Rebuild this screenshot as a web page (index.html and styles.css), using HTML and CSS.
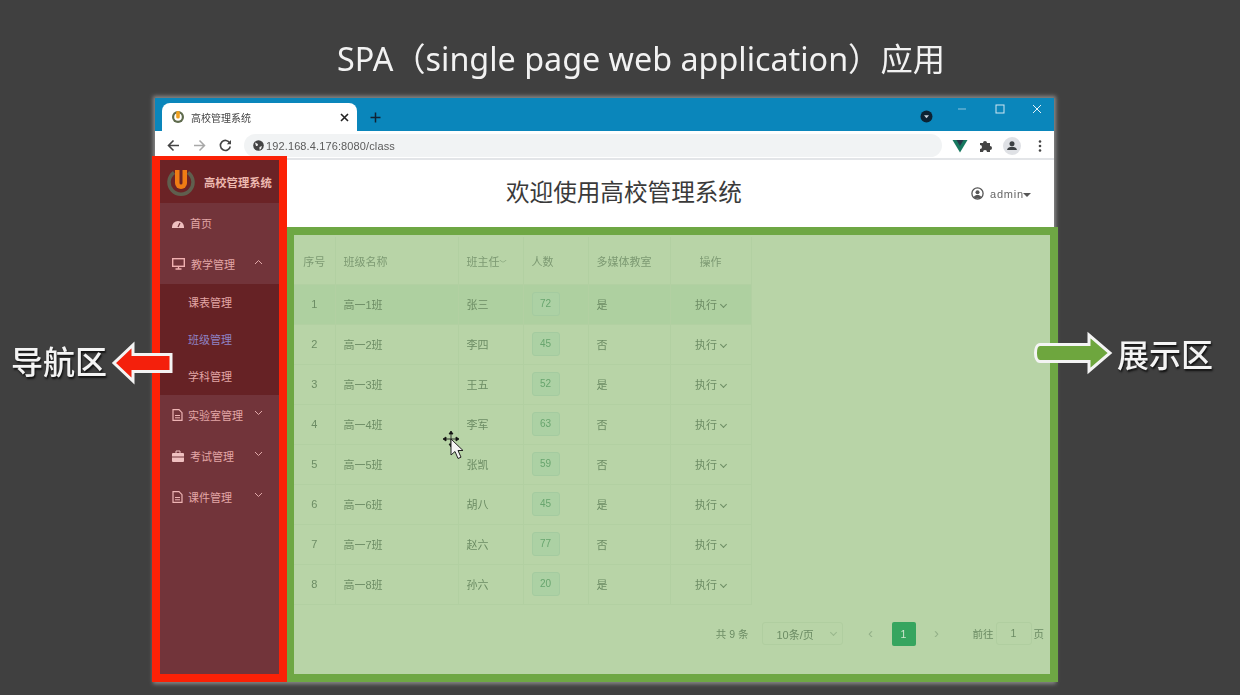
FILE: index.html
```html
<!DOCTYPE html>
<html lang="en">
<head>
  <meta charset="UTF-8" />
  <title>SPA 应用</title>
  <link rel="stylesheet" href="styles.css">
</head>
<body>
  <h1 class="slide-title">SPA（single page web application）应用</h1>

  <div class="window">
    <!-- Browser chrome -->
    <div class="tabstrip">
      <div class="tab">
        <svg class="favicon" width="14" height="14" viewBox="0 0 14 14"><circle cx="7" cy="7" r="6" fill="#5f6b4d"/><circle cx="7" cy="7" r="3.8" fill="#fff"/><rect x="5.2" y="1" width="3.6" height="7.6" rx="1.6" fill="#f0a020"/></svg>
        <span class="tab-title">高校管理系统</span>
        <svg class="tab-close" width="9" height="9" viewBox="0 0 9 9"><path d="M1 1l7 7M8 1L1 8" stroke="#222" stroke-width="1.6"/></svg>
      </div>
      <svg class="tab-new" width="11" height="11" viewBox="0 0 11 11"><path d="M5.5 0.5v10M0.5 5.5h10" stroke="#123" stroke-width="1.5"/></svg>
      <svg class="cast" width="13" height="13" viewBox="0 0 13 13"><circle cx="6.500" cy="6.500" r="6" fill="#0c2233"/><path d="M4 5.300h5L6.500 8.300z" fill="#c8d4dc"/></svg>
      <div class="win-btns">
        <svg width="10" height="10" viewBox="0 0 10 10"><path d="M1 5h8" stroke="#8cc4de" stroke-width="1"/></svg>
        <svg width="10" height="10" viewBox="0 0 10 10"><rect x="1" y="1" width="8" height="8" fill="none" stroke="#cfe6f2" stroke-width="1"/></svg>
        <svg width="10" height="10" viewBox="0 0 10 10"><path d="M1 1l8 8M9 1L1 9" stroke="#e6f3f9" stroke-width="1"/></svg>
      </div>
    </div>
    <div class="toolbar">
      <svg class="nav-ico" width="13" height="13" viewBox="0 0 13 13"><path d="M12 6.500H2M6.500 1.500l-5 5 5 5" fill="none" stroke="#444" stroke-width="1.600"/></svg>
      <svg class="nav-ico" width="13" height="13" viewBox="0 0 13 13"><path d="M1 6.500h10M6.500 1.500l5 5-5 5" fill="none" stroke="#a8a8a8" stroke-width="1.500"/></svg>
      <svg class="nav-ico" width="13" height="13" viewBox="0 0 13 13"><path d="M10.800 4a5 5 0 1 0 .5 3.500" fill="none" stroke="#444" stroke-width="1.600"/><path d="M12 1v4.200H7.800z" fill="#444"/></svg>
      <div class="omnibox">
        <svg width="11" height="11" viewBox="0 0 11 11"><circle cx="5.500" cy="5.500" r="5.300" fill="#444"/><path d="M2 2.500l3 1.500-.5 2L3 6zM6.500 7l2.500-1-1 3-1.500.8z" fill="#eee"/></svg>
        <span>192.168.4.176:8080/class</span>
      </div>
      <svg class="ext ext-vue" width="16" height="14" viewBox="0 0 16 14"><path d="M0.500 1h15L8 13.500z" fill="#17785f"/><path d="M4.500 1h7L8 7z" fill="#28374a"/></svg>
      <svg class="ext ext-puzzle" width="14" height="14" viewBox="0 0 14 14"><path d="M1 4h3a2 2 0 0 1 4 0h3v3a2 2 0 0 1 0 4v2H8a2 2 0 0 0-4 0H1v-3a2 2 0 0 0 0-4z" fill="#444"/></svg>
      <svg class="ext ext-avatar" width="18" height="18" viewBox="0 0 18 18"><circle cx="9" cy="9" r="9" fill="#dfe1e5"/><circle cx="9" cy="6.800" r="2.500" fill="#3c4043"/><path d="M4 13c.4-2.200 2.600-3.200 5-3.200s4.600 1 5 3.200z" fill="#3c4043"/></svg>
      <svg class="ext" width="4" height="12" viewBox="0 0 4 12"><circle cx="2" cy="1.500" r="1.300" fill="#444"/><circle cx="2" cy="6" r="1.300" fill="#444"/><circle cx="2" cy="10.500" r="1.300" fill="#444"/></svg>
    </div>

    <div class="app">
      <!-- Sidebar -->
      <div class="sidebar">
        <div class="brand">
          <svg width="28" height="28" viewBox="0 0 28 28"><path d="M7 4.500a12 12 0 1 0 14 0" fill="none" stroke="#5f5f4e" stroke-width="3.500"/><path d="M8 2h12v13a6 6 0 0 1-12 0z" fill="#f07c14"/><path d="M12.500 2h3v13a1.500 1.500 0 0 1-3 0z" fill="#6b2326"/></svg>
          <span>高校管理系统</span>
        </div>
        <div class="menu-item">
          <svg width="12" height="10" viewBox="0 0 12 10"><path d="M0 9a6 6 0 0 1 12 0v1H0z" fill="#f0c0c0"/><path d="M6 9l2-4" stroke="#72343a" stroke-width="1.200"/></svg>
          <span>首页</span>
        </div>
        <div class="menu-item">
          <svg width="13" height="12" viewBox="0 0 13 12"><rect x="0.700" y="0.700" width="11.600" height="7.600" fill="none" stroke="#f0b0b0" stroke-width="1.400"/><path d="M3.500 11h6M6.500 9v2" stroke="#f0b0b0" stroke-width="1.300"/></svg>
          <span>教学管理</span>
          <svg class="chev" width="9" height="6" viewBox="0 0 9 6"><path d="M1 5l3.500-3.500L8 5" fill="none" stroke="#e0a8a8"/></svg>
        </div>
        <div class="submenu">
          <div class="sub-item">课表管理</div>
          <div class="sub-item active">班级管理</div>
          <div class="sub-item">学科管理</div>
        </div>
        <div class="menu-item">
          <svg width="11" height="12" viewBox="0 0 11 12"><path d="M1 .7h6l3 3v7.600H1z" fill="none" stroke="#eeb4b4" stroke-width="1.200"/><path d="M3 6.500h5M3 8.800h5" stroke="#eeb4b4"/></svg>
          <span class="narrow">实验室管理</span>
          <svg class="chev" width="9" height="6" viewBox="0 0 9 6"><path d="M1 1l3.500 3.500L8 1" fill="none" stroke="#e0a8a8"/></svg>
        </div>
        <div class="menu-item">
          <svg width="12" height="12" viewBox="0 0 12 12"><path d="M4 3V1h4v2" fill="none" stroke="#f0c0c0"/><rect y="3" width="12" height="9" rx="1" fill="#f0c0c0"/><path d="M0 7h12" stroke="#72343a"/></svg>
          <span>考试管理</span>
          <svg class="chev" width="9" height="6" viewBox="0 0 9 6"><path d="M1 1l3.500 3.500L8 1" fill="none" stroke="#e0a8a8"/></svg>
        </div>
        <div class="menu-item">
          <svg width="11" height="12" viewBox="0 0 11 12"><path d="M1 .7h6l3 3v7.600H1z" fill="none" stroke="#eeb4b4" stroke-width="1.200"/><path d="M3 6.500h5M3 8.800h5" stroke="#eeb4b4"/></svg>
          <span class="narrow">课件管理</span>
          <svg class="chev" width="9" height="6" viewBox="0 0 9 6"><path d="M1 1l3.500 3.500L8 1" fill="none" stroke="#e0a8a8"/></svg>
        </div>
      </div>

      <!-- Main -->
      <div class="main">
        <div class="header">
          <div class="header-title">欢迎使用高校管理系统</div>
          <div class="user">
            <svg width="13" height="13" viewBox="0 0 13 13"><circle cx="6.500" cy="6.500" r="5.600" fill="none" stroke="#555" stroke-width="1.300"/><circle cx="6.500" cy="5.200" r="2" fill="#555"/><path d="M2.800 10c.8-1.500 2.200-2 3.700-2s2.900.5 3.700 2l-1.500 1.500h-4.500z" fill="#555"/></svg>
            <span>admin</span><i class="caret"></i>
          </div>
        </div>

        <div class="content">
          <table class="grid">
            <colgroup><col class="c1"><col class="c2"><col class="c3"><col class="c4"><col class="c5"><col class="c6"></colgroup>
            <thead>
              <tr><th class="mid">序号</th><th>班级名称</th><th>班主任<small>﹀</small></th><th>人数</th><th>多媒体教室</th><th class="mid">操作</th></tr>
            </thead>
            <tbody>
              <tr class="hover"><td class="mid">1</td><td>高一1班</td><td>张三</td><td><b class="badge">72</b></td><td>是</td><td class="mid">执行<i class="down"></i></td></tr>
              <tr><td class="mid">2</td><td>高一2班</td><td>李四</td><td><b class="badge">45</b></td><td>否</td><td class="mid">执行<i class="down"></i></td></tr>
              <tr><td class="mid">3</td><td>高一3班</td><td>王五</td><td><b class="badge">52</b></td><td>是</td><td class="mid">执行<i class="down"></i></td></tr>
              <tr><td class="mid">4</td><td>高一4班</td><td>李军</td><td><b class="badge">63</b></td><td>否</td><td class="mid">执行<i class="down"></i></td></tr>
              <tr><td class="mid">5</td><td>高一5班</td><td>张凯</td><td><b class="badge">59</b></td><td>否</td><td class="mid">执行<i class="down"></i></td></tr>
              <tr><td class="mid">6</td><td>高一6班</td><td>胡八</td><td><b class="badge">45</b></td><td>是</td><td class="mid">执行<i class="down"></i></td></tr>
              <tr><td class="mid">7</td><td>高一7班</td><td>赵六</td><td><b class="badge">77</b></td><td>否</td><td class="mid">执行<i class="down"></i></td></tr>
              <tr><td class="mid">8</td><td>高一8班</td><td>孙六</td><td><b class="badge">20</b></td><td>是</td><td class="mid">执行<i class="down"></i></td></tr>
            </tbody>
          </table>

          <div class="pager">
            <span class="total">共 9 条</span>
            <div class="size">10条/页<i class="down"></i></div>
            <span class="arrow prev">‹</span>
            <span class="current">1</span>
            <span class="arrow next">›</span>
            <span class="goto">前往</span>
            <span class="goto-box">1</span>
            <span>页</span>
          </div>
        </div>
      </div>
    </div>
  </div>

  <!-- Slide annotations -->
  <div class="label label-nav">导航区</div>
  <svg class="callout callout-nav" width="64" height="44" viewBox="0 0 64 44">
    <path d="M60 13.500H22V4L3 22l19 18V30.500H60z" fill="#f4200c" stroke="#f4f4f4" stroke-width="3" stroke-linejoin="miter"/>
  </svg>
  <div class="label label-show">展示区</div>
  <svg class="callout callout-show" width="82" height="44" viewBox="0 0 82 44">
    <path d="M8 13.500H57V4l21 18-21 18V30.500H8c-6 0-6-17 0-17z" fill="#6ea63e" stroke="#f4f4f4" stroke-width="3"/>
  </svg>
  <svg class="pointer" width="22" height="32" viewBox="0 0 22 32">
    <path d="M9 1l2 3H7zM9 17l2-3H7zM1 9l3-2v4zM17 9l-3-2v4zM9 4v10M4 9h10" fill="#111" stroke="#111" stroke-width=".8"/>
    <path d="M9 9v16l4-3.500 3 7 3-1.300-3-6.700h5z" fill="#f4f4f4" stroke="#222" stroke-width="1"/>
  </svg>
</body>
</html>
```

FILE: styles.css
```css
html, body {
  margin: 0;
  height: 100%;
}

body {
  position: relative;
  height: 695px;
  overflow: hidden;
  background: #404040;
  font-family: "Liberation Sans", "Noto Sans CJK SC", sans-serif;
  filter: blur(.45px);
}

.slide-title {
  margin: 0;
  height: 98px;
  box-sizing: border-box;
  padding: 36px 0 0 42px;
  text-align: center;
  font-family: "Noto Sans", "Noto Sans CJK SC", sans-serif;
  font-size: 32.3px;
  line-height: 44px;
  font-weight: 400;
  color: #f2f2f2;
}

.window {
  width: 899px;
  margin-left: 155px;
  box-shadow: 0 0 4px 2px #8a8a8a;
  background: #fff;
}

/* browser chrome */
.tabstrip {
  display: flex;
  align-items: flex-end;
  height: 33px;
  background: #0a86bb;
}

.tab {
  display: flex;
  align-items: center;
  box-sizing: border-box;
  width: 195px;
  height: 28px;
  margin-left: 7px;
  padding: 0 8px 0 9px;
  background: #fff;
  border-radius: 8px 8px 0 0;
}

.tab-title {
  margin-left: 6px;
  font-size: 10px;
  color: #444;
}

.tab-close {
  margin-left: auto;
}

.tab-new {
  margin: 0 0 8px 13px;
}

.cast {
  margin: 0 0 8px 539px;
}

.win-btns {
  display: flex;
  gap: 27.500px;
  margin: 0 0 17px 24px;
}

.toolbar {
  display: flex;
  align-items: center;
  box-sizing: border-box;
  height: 29px;
  padding: 2px 0 0 12px;
  border-bottom: 2px solid #e3e5e8;
  background: #fff;
}

.nav-ico {
  margin-right: 13px;
}

.omnibox {
  display: flex;
  align-items: center;
  gap: 2px;
  box-sizing: border-box;
  width: 698px;
  height: 23px;
  margin-left: -1px;
  margin-right: 10px;
  padding-left: 9px;
  background: #f1f3f4;
  border-radius: 12px;
  font-size: 11px;
  letter-spacing: .12px;
  color: #5b5b5b;
}

.ext {
  margin-right: 9px;
}

.ext-vue {
  margin-right: 11px;
}

.ext-puzzle {
  margin-right: 10px;
}

.ext-avatar {
  margin-right: 17px;
}

/* app */
.app {
  display: flex;
  height: 526px;
  margin: -4px -4px 0 -3px;
}

.sidebar {
  box-sizing: border-box;
  flex: 0 0 135px;
  border: 8px solid #fb2106;
  border-top-width: 4px;
  background: #72343a;
  position: relative;
}

.brand {
  display: flex;
  align-items: center;
  gap: 9px;
  height: 43px;
  padding-left: 7px;
  background: #6b2326;
  font-size: 11.300px;
  font-weight: 700;
  white-space: nowrap;
  color: #eeb9b0;
}

.menu-item {
  display: flex;
  align-items: center;
  box-sizing: border-box;
  height: 41px;
  padding: 0 0 2px 12px;
  font-size: 11px;
  color: #e3a6a6;
}

.menu-item span {
  margin-left: 6px;
  white-space: nowrap;
}

.menu-item .chev {
  position: absolute;
  right: 16px;
  margin-top: -3px;
}

.menu-item .narrow {
  margin-left: 5px;
}

.submenu {
  height: 111px;
  margin-top: -1px;
  background: #662225;
}

.sub-item {
  height: 37px;
  padding-left: 28px;
  font-size: 11px;
  line-height: 39px;
  color: #e3a6a6;
}

.sub-item.active {
  color: #8f82c4;
}

.main {
  display: flex;
  flex-direction: column;
  flex: 1;
  min-width: 0;
}

.header {
  display: flex;
  align-items: center;
  justify-content: space-between;
  flex: 0 0 67px;
  box-sizing: border-box;
  margin: 4px 4px 0 0;
  padding: 0 23px 6px 219px;
  background: #fff;
}

.header-title {
  font-size: 23.600px;
  color: #3a3a3a;
  font-family: "Noto Sans CJK SC", sans-serif;
}

.user {
  display: flex;
  align-items: center;
  gap: 6px;
  padding-top: 6px;
  font-size: 11px;
  letter-spacing: .8px;
  color: #666;
}

.caret {
  width: 0;
  height: 0;
  margin: 3px 0 0 -7px;
  border: 4px solid transparent;
  border-top-color: #555;
  border-bottom-width: 0;
}

.content {
  flex: 1;
  min-height: 0;
  border: 8px solid #6ea744;
  border-left-width: 7px;
  background: #b8d4a7;
}

/* table */
.grid {
  width: 457px;
  margin-top: 2px;
  border-collapse: collapse;
  table-layout: fixed;
  font-size: 11px;
  color: #6c8c64;
}

.c1 { width: 41px; }
.c2 { width: 123px; }
.c3 { width: 65px; }
.c4 { width: 65px; }
.c5 { width: 82px; }
.c6 { width: 81px; }

.grid th,
.grid td {
  box-sizing: border-box;
  height: 40px;
  padding: 0 0 0 8px;
  border: 1px solid #b2d0a2;
  border-left: 0;
  text-align: left;
  font-weight: 400;
}

.grid th {
  height: 47px;
  padding-top: 1px;
  border-top: 0;
  color: #7d9a73;
}

.grid .mid {
  padding-left: 0;
  text-align: center;
}

.grid small {
  font-size: 7px;
}

.hover td {
  background: #aed0a0;
}

.badge {
  display: inline-block;
  box-sizing: border-box;
  width: 28px;
  height: 24px;
  border: 1px solid #a4cba0;
  border-radius: 3px;
  background: #acd1a4;
  text-align: center;
  font-size: 10px;
  font-weight: 400;
  line-height: 22px;
  color: #68a56e;
}

.down {
  display: inline-block;
  width: 4px;
  height: 4px;
  margin: 0 0 2px 4px;
  border: solid #6c8c64;
  border-width: 0 1px 1px 0;
  transform: rotate(45deg);
}

.pager {
  display: flex;
  align-items: center;
  justify-content: flex-end;
  height: 24px;
  margin-top: 17px;
  padding-right: 6px;
  font-size: 10.500px;
  color: #6c8c64;
}

.total {
  margin-right: 13px;
}

.size {
  display: flex;
  align-items: center;
  justify-content: space-between;
  box-sizing: border-box;
  width: 81px;
  height: 23px;
  padding: 0 6px 0 14px;
  border: 1px solid #b0cea0;
  border-radius: 3px;
  font-size: 11px;
}

.size .down {
  border-color: #98b78c;
}

.arrow {
  width: 24px;
  margin-bottom: 2px;
  text-align: center;
  font-size: 15px;
  color: #93b088;
}

.prev {
  margin: 0 9px 2px 16px;
}

.next {
  margin-left: 9px;
}

.current {
  width: 24px;
  height: 24px;
  border-radius: 2px;
  background: #36a55f;
  text-align: center;
  line-height: 24px;
  color: #cfe7cf;
}

.goto {
  margin-left: 24px;
}

.goto-box {
  box-sizing: border-box;
  width: 36px;
  height: 23px;
  margin: 0 2px 0 2px;
  border: 1px solid #b0cea0;
  border-radius: 3px;
  text-align: center;
  line-height: 21px;
}

/* annotations over the slide */
.label {
  position: absolute;
  font-family: "Noto Sans CJK SC", sans-serif;
  font-size: 32px;
  font-weight: 500;
  line-height: 40px;
  color: #f4f4f4;
  text-shadow: 1px 2px 2px #111;
}

.label-nav {
  left: 11px;
  top: 340px;
}

.label-show {
  left: 1117px;
  top: 333px;
}

.callout {
  position: absolute;
}

.callout-nav {
  left: 111px;
  top: 341px;
}

.callout-show {
  left: 1032px;
  top: 331px;
}

.pointer {
  position: absolute;
  left: 442px;
  top: 430px;
}
```
